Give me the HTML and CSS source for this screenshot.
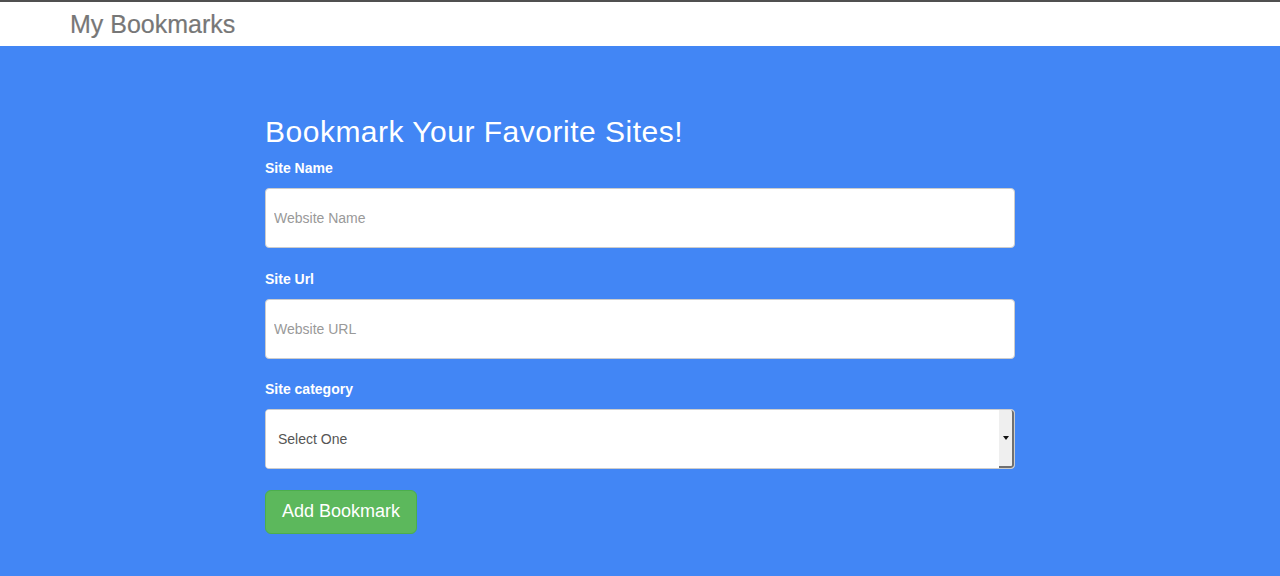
FILE: index.html
```html
<!DOCTYPE html>
<html lang="en">
<head>
<meta charset="utf-8">
<title>My Bookmarks</title>
<link rel="stylesheet" href="styles.css">
</head>
<body>
<nav class="navbar">
  <div class="container">
    <a class="brand" href="#">My Bookmarks</a>
  </div>
</nav>
<main class="hero">
  <form class="bm-form">
    <h2 class="title">Bookmark Your Favorite Sites!</h2>
    <div class="group">
      <label class="label" for="siteName">Site Name</label>
      <input class="field" id="siteName" type="text" placeholder="Website Name">
    </div>
    <div class="group">
      <label class="label" for="siteUrl">Site Url</label>
      <input class="field" id="siteUrl" type="text" placeholder="Website URL">
    </div>
    <div class="group">
      <label class="label" for="siteCat">Site category</label>
      <div class="select-box">
        <select class="select" id="siteCat">
          <option>Select One</option>
        </select>
        <span class="select-arrow"><span class="tri"></span></span>
      </div>
    </div>
    <button class="btn" type="button">Add Bookmark</button>
  </form>
</main>
</body>
</html>
```
FILE: styles.css
```css
* { box-sizing: border-box; }
html, body {
  margin: 0;
  padding: 0;
  height: 100%;
}
body {
  font-family: "Liberation Sans", Arial, Helvetica, sans-serif;
  font-size: 14px;
  line-height: 1.42857;
  background: #4286f5;
  color: #333;
}
.navbar {
  background: #fff;
  border-top: 2px solid #505050;
  height: 46px;
}
.container {
  width: 1170px;
  margin: 0 auto;
  padding: 0 15px;
  display: flex;
  align-items: center;
  height: 44px;
}
.brand {
  color: #777;
  text-decoration: none;
  font-size: 25px;
  line-height: 26px;
  padding-top: 0;
  -webkit-text-stroke: 0.2px #777;
}
.hero {
  padding-top: 69px;
}
.bm-form {
  width: 750px;
  margin: 0 auto;
  display: flex;
  flex-direction: column;
}
.title {
  margin: 0 0 10px;
  font-size: 30px;
  font-weight: 400;
  line-height: 33px;
  letter-spacing: 0.5px;
  color: #fff;
}
.group {
  display: flex;
  flex-direction: column;
  margin-bottom: 20.5px;
}
.label {
  color: #fff;
  font-weight: 700;
  font-size: 14px;
  line-height: 20px;
  margin-bottom: 10px;
}
.field {
  height: 60px;
  width: 100%;
  border: 1px solid #ccc;
  border-radius: 4px;
  padding: 0 8px;
  font-family: inherit;
  font-size: 14px;
  color: #555;
  background: #fff;
  outline: none;
}
.field::placeholder { color: #999; }
.select-box {
  display: flex;
  height: 60px;
  border: 1px solid #ccc;
  border-radius: 4px;
  background: #fff;
  overflow: hidden;
}
.select {
  flex: 1;
  -webkit-appearance: none;
  appearance: none;
  border: none;
  background: #fff;
  font-family: inherit;
  font-size: 14px;
  color: #555;
  padding: 0 12px;
  outline: none;
}
.select-arrow {
  width: 15px;
  background: #efefef;
  border-right: 2px solid #707070;
  border-bottom: 2px solid #707070;
  border-top-right-radius: 3px;
  border-bottom-right-radius: 3px;
  display: flex;
  align-items: center;
  justify-content: center;
}
.tri {
  width: 0;
  height: 0;
  border-left: 3px solid transparent;
  border-right: 3px solid transparent;
  border-top: 4px solid #111;
}
.btn {
  align-self: flex-start;
  height: 44px;
  padding: 0 16px;
  background: #5cb85c;
  border: 1px solid #4cae4c;
  border-radius: 6px;
  color: #fff;
  font-family: inherit;
  font-size: 18px;
  cursor: pointer;
}
```
